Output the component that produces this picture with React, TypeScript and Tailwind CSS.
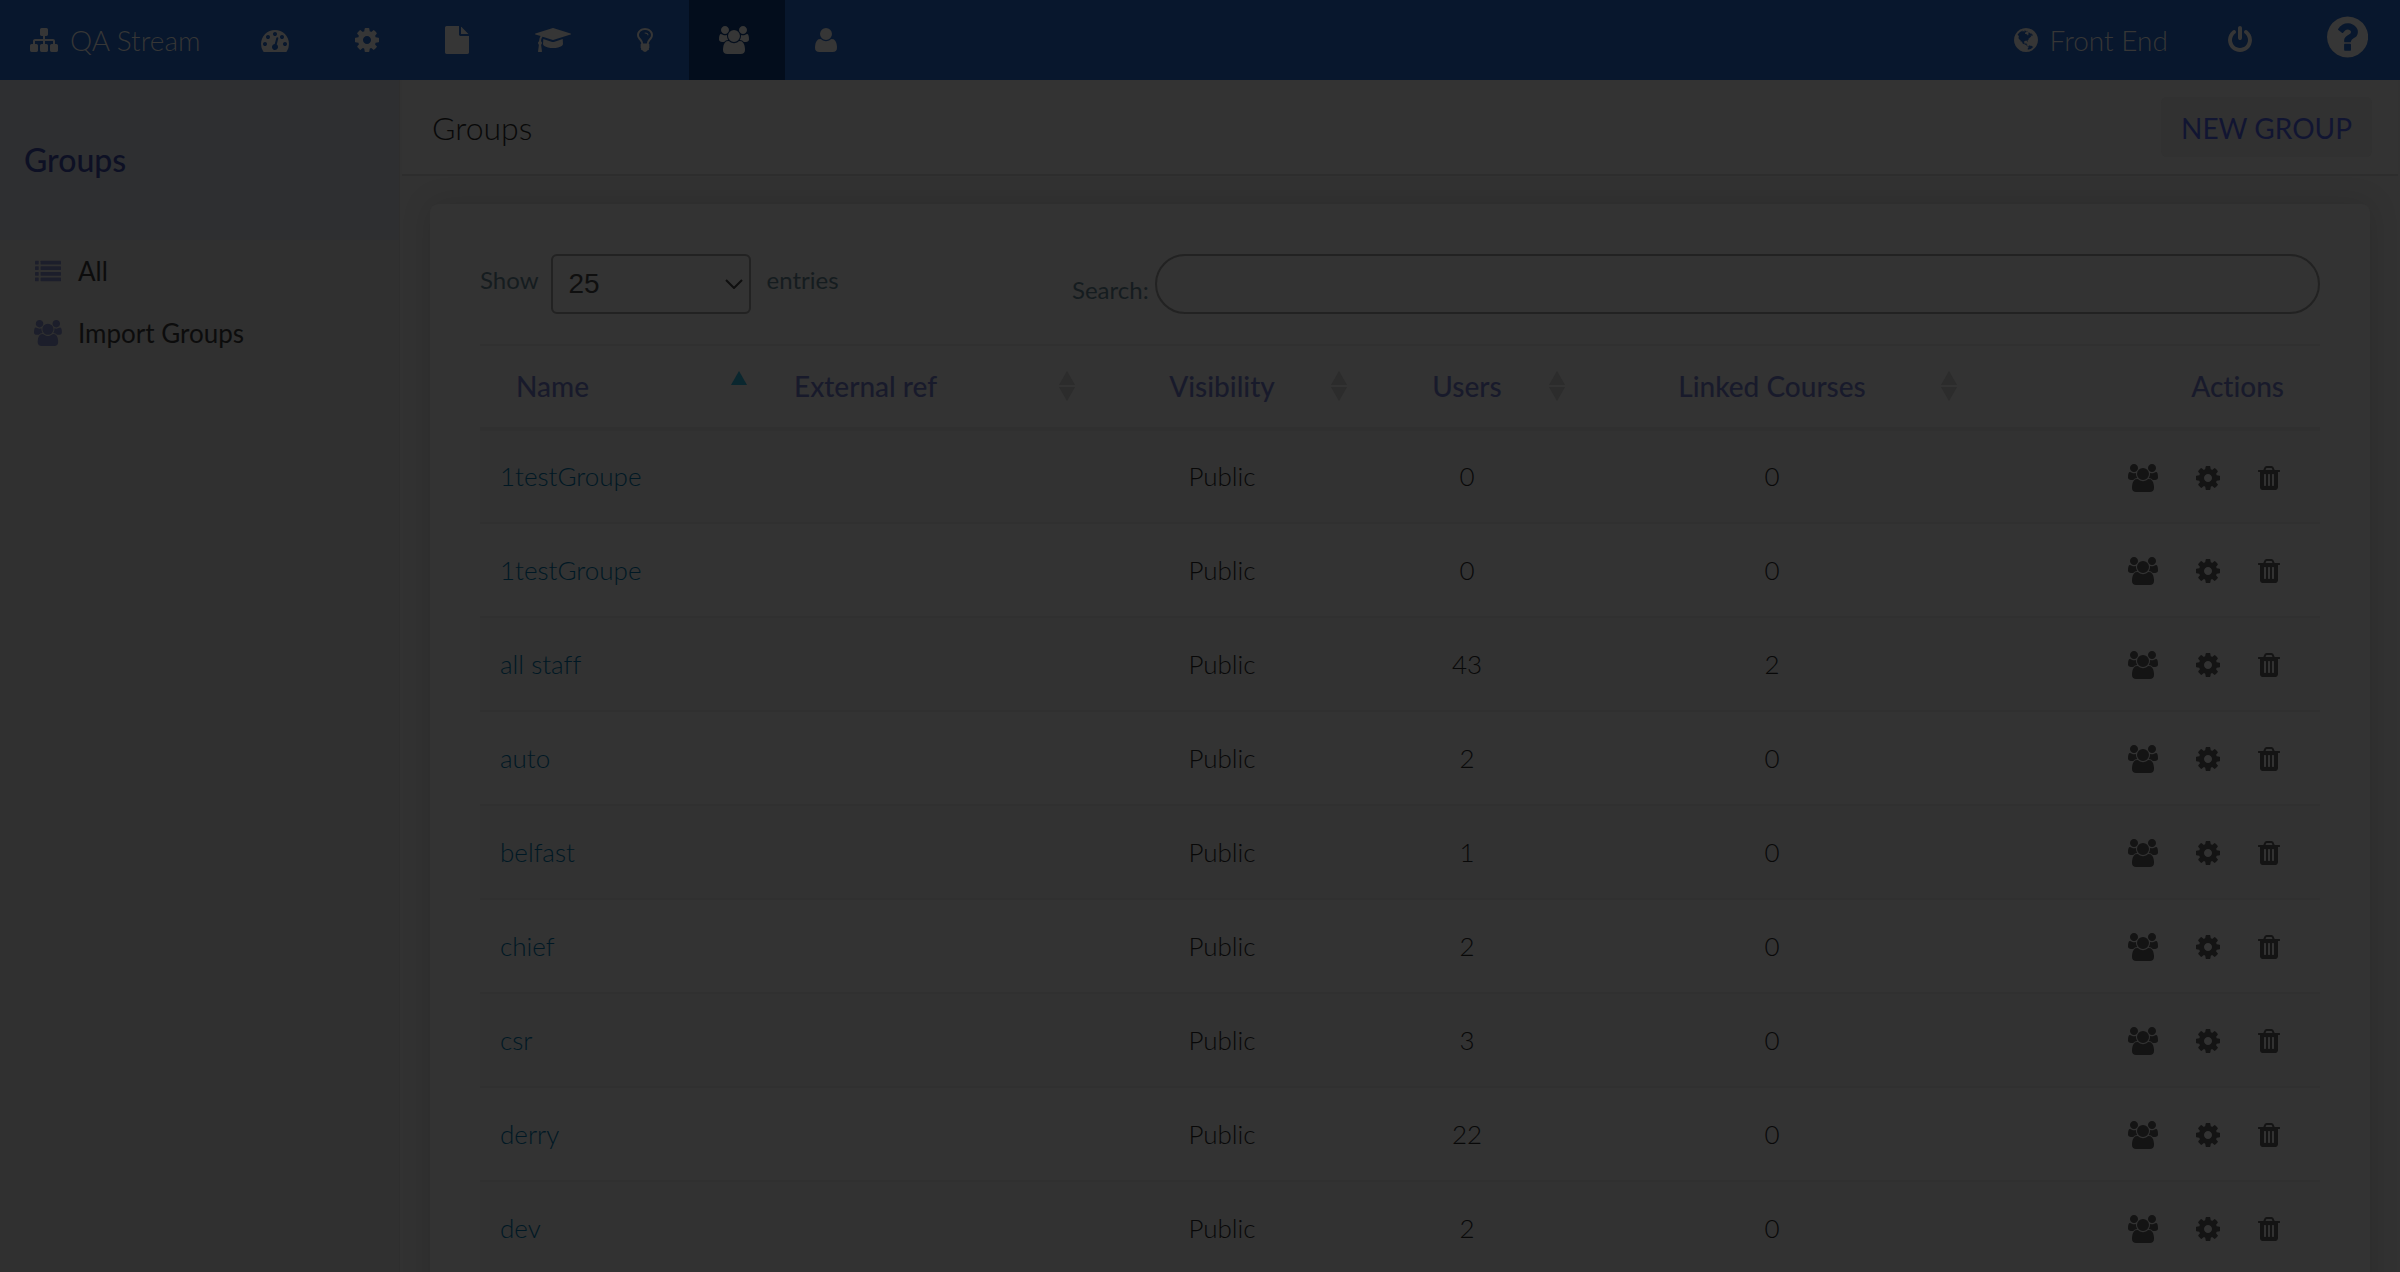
import type { ReactNode } from 'react';

type IconProps = { className?: string };

const Glyph = ({ box, d, className = 'h-7 w-auto' }: IconProps & { box: string; d: string }) => (
  <svg viewBox={box} className={`${className} shrink-0 fill-current`} aria-hidden="true">
    <path d={d} />
  </svg>
);

const Sitemap = (p: IconProps) => (
  <Glyph {...p} box="0 0 1792 1792" d="M1792 1248v320q0 40-28 68t-68 28h-320q-40 0-68-28t-28-68v-320q0-40 28-68t68-28h96v-192h-512v192h96q40 0 68 28t28 68v320q0 40-28 68t-68 28h-320q-40 0-68-28t-28-68v-320q0-40 28-68t68-28h96v-192h-512v192h96q40 0 68 28t28 68v320q0 40-28 68t-68 28h-320q-40 0-68-28t-28-68v-320q0-40 28-68t68-28h96v-192q0-52 38-90t90-38h512v-192h-96q-40 0-68-28t-28-68v-320q0-40 28-68t68-28h320q40 0 68 28t28 68v320q0 40-28 68t-68 28h-96v192h512q52 0 90 38t38 90v192h96q40 0 68 28t28 68z" />
);
const Gauge = (p: IconProps) => (
  <Glyph {...p} box="0 0 1792 1792" d="M384 1152q0-53-37.5-90.5t-90.5-37.5-90.5 37.5-37.5 90.5 37.5 90.5 90.5 37.5 90.5-37.5 37.5-90.5zm192-448q0-53-37.5-90.5t-90.5-37.5-90.5 37.5-37.5 90.5 37.5 90.5 90.5 37.5 90.5-37.5 37.5-90.5zm428 481l101-382q6-26-7.5-48.5t-38.5-29.5-48 6.5-30 39.5l-101 382q-60 5-107 43.5t-63 98.5q-20 77 20 146t117 89 146-20 89-117q16-60-6-117t-72-91zm660-33q0-53-37.5-90.5t-90.5-37.5-90.5 37.5-37.5 90.5 37.5 90.5 90.5 37.5 90.5-37.5 37.5-90.5zm-640-640q0-53-37.5-90.5t-90.5-37.5-90.5 37.5-37.5 90.5 37.5 90.5 90.5 37.5 90.5-37.5 37.5-90.5zm448 192q0-53-37.5-90.5t-90.5-37.5-90.5 37.5-37.5 90.5 37.5 90.5 90.5 37.5 90.5-37.5 37.5-90.5zm320 448q0 261-141 483-19 29-54 29h-1402q-35 0-54-29-141-221-141-483 0-182 71-348t191-286 286-191 348-71 348 71 286 191 191 286 71 348z" />
);
const Cog = (p: IconProps) => (
  <Glyph {...p} box="128 0 1536 1792" d="M1152 896q0-106-75-181t-181-75-181 75-75 181 75 181 181 75 181-75 75-181zm512-109v222q0 12-8 23t-20 13l-185 28q-19 54-39 91 35 50 107 138 10 12 10 25t-9 23q-27 37-99 108t-94 71q-12 0-26-9l-138-108q-44 23-91 38-16 136-29 186-7 28-36 28h-222q-14 0-24.5-8.5t-11.5-21.5l-28-184q-49-16-90-37l-141 107q-10 9-25 9-14 0-25-11-126-114-165-168-7-10-7-23 0-12 8-23 15-21 51-66.5t54-70.5q-27-50-41-99l-183-27q-13-2-21-12.5t-8-23.5v-222q0-12 8-23t19-13l186-28q14-46 39-92-40-57-107-138-10-12-10-24 0-10 9-23 26-36 98.5-107.5t94.5-71.5q13 0 26 10l138 107q44-23 91-38 16-136 29-186 7-28 36-28h222q14 0 24.5 8.5t11.5 21.5l28 184q49 16 90 37l142-107q9-9 24-9 13 0 25 10 129 119 165 170 7 8 7 22 0 12-8 23-15 21-51 66.5t-54 70.5q26 50 41 98l183 28q13 2 21 12.5t8 23.5z" />
);
const File = (p: IconProps) => (
  <Glyph {...p} box="128 0 1536 1792" d="M1152 512v-472q22 14 36 28l408 408q14 14 28 36h-472zm-128 32q0 40 28 68t68 28h544v1056q0 40-28 68t-68 28h-1344q-40 0-68-28t-28-68v-1600q0-40 28-68t68-28h800v544z" />
);
const GradCap = (p: IconProps) => (
  <Glyph {...p} box="0 0 2304 1792" d="M1774 836l18 316q4 69-82 128t-235 93.5-323 34.5-323-34.5-235-93.5-82-128l18-316 574 181q22 7 48 7t48-7zm530-324q0 23-22 31l-1120 352q-4 1-10 1t-10-1l-652-206q-43 34-71 111.5t-34 178.5q63 36 63 109 0 69-58 107l58 433q2 14-8 25-9 11-24 11h-192q-15 0-24-11-10-11-8-25l58-433q-58-38-58-107 0-73 65-111 11-207 98-330l-333-104q-22-8-22-31t22-31l1120-352q4-1 10-1t10 1l1120 352q22 8 22 31z" />
);
const Bulb = (p: IconProps) => (
  <Glyph {...p} box="384 0 1024 1792" d="M1120 576q0 13-9.5 22.5t-22.5 9.5-22.5-9.5-9.5-22.5q0-46-54-71t-106-25q-13 0-22.5-9.5t-9.5-22.5 9.5-22.5 22.5-9.5q50 0 99.5 16t87 54 37.5 90zm160 0q0-72-34.5-134t-90-101.5-123-62-136.5-22.5-136.5 22.5-123 62-90 101.5-34.5 134q0 101 68 180 10 11 30.5 33t30.5 33q128 153 141 298h228q13-145 141-298 10-11 30.5-33t30.5-33q68-79 68-180zm128 0q0 155-103 268-45 49-74.5 87t-59.5 95.5-34 107.5q47 28 47 82 0 37-25 64 25 27 25 64 0 52-45 81 13 23 13 47 0 46-31.5 71t-77.5 25q-20 44-60 70t-87 26-87-26-60-70q-46 0-77.5-25t-31.5-71q0-24 13-47-45-29-45-81 0-37 25-64-25-27-25-64 0-54 47-82-4-50-34-107.5t-59.5-95.5-74.5-87q-103-113-103-268 0-99 44.5-184.5t117-142 164-89 186.5-32.5 186.5 32.5 164 89 117 142 44.5 184.5z" />
);
const Users = (p: IconProps) => (
  <Glyph {...p} box="64 0 1920 1792" d="M657 896q-162 5-265 128h-134q-82 0-138-40.5t-56-118.5q0-353 124-353 6 0 43.5 21t97.5 42.5 119 21.5q67 0 133-23-5 37-5 66 0 139 81 256zm1071 637q0 120-73 189.5t-194 69.5h-874q-121 0-194-69.5t-73-189.5q0-53 3.5-103.5t14-109 26.5-108.5 43-97.5 62-81 85.5-53.5 111.5-20q10 0 43 21.5t73 48 107 48 135 21.5 135-21.5 107-48 73-48 43-21.5q61 0 111.5 20t85.5 53.5 62 81 43 97.5 26.5 108.5 14 109 3.5 103.5zm-1024-1277q0 106-75 181t-181 75-181-75-75-181 75-181 181-75 181 75 75 181zm704 384q0 159-112.5 271.5t-271.5 112.5-271.5-112.5-112.5-271.5 112.5-271.5 271.5-112.5 271.5 112.5 112.5 271.5zm576 225q0 78-56 118.5t-138 40.5h-134q-103-123-265-128 81-117 81-256 0-29-5-66 66 23 133 23 59 0 119-21.5t97.5-42.5 43.5-21q124 0 124 353zm-128-609q0 106-75 181t-181 75-181-75-75-181 75-181 181-75 181 75 75 181z" />
);
const User = (p: IconProps) => (
  <Glyph {...p} box="192 0 1408 1792" d="M1600 1405q0 120-73 189.5t-194 69.5h-874q-121 0-194-69.5t-73-189.5q0-53 3.5-103.5t14-109 26.5-108.5 43-97.5 62-81 85.5-53.5 111.5-20q9 0 42 21.5t74.5 48 108 48 133.5 21.5 133.5-21.5 108-48 74.5-48 42-21.5q61 0 111.5 20t85.5 53.5 62 81 43 97.5 26.5 108.5 14 109 3.5 103.5zm-320-893q0 159-112.5 271.5t-271.5 112.5-271.5-112.5-112.5-271.5 112.5-271.5 271.5-112.5 271.5 112.5 112.5 271.5z" />
);
const Globe = (p: IconProps) => (
  <Glyph {...p} box="128 0 1536 1792" d="M896 128q209 0 385.5 103t279.5 279.5 103 385.5-103 385.5-279.5 279.5-385.5 103-385.5-103-279.5-279.5-103-385.5 103-385.5 279.5-279.5 385.5-103zm274 521q-2 1-9.5 9.5t-13.5 9.5q2 0 4.5-5t5-11 3.5-7q6-7 22-15 14-6 52-12 34-8 51 11-2-2 9.5-13t14.5-12q3-2 15-4.5t15-7.5l2-22q-12 1-17.5-7t-6.5-21q0 2-6 8 0-7-4.5-8t-11.5 1-9 1q-10-3-15-7.5t-8-16.5-4-15q-2-5-9.5-11t-9.5-10q-1-2-2.5-5.5t-3-6.5-4-5.5-5.5-2.5-7 5-7.5 10-4.5 5q-3-2-6-1.5t-4.5 1-4.5 3-5 3.5q-3 2-8.5 3t-8.5 2q15-5-1-11-10-4-16-3 9-4 7.5-12t-8.5-14h5q-1-4-8.5-8.5t-17.5-8.5-13-6q-8-5-34-9.5t-33-.5q-5 6-4.5 10.5t4 14 3.5 12.5q1 6-5.5 13t-6.5 12q0 7 14 15.5t10 21.5q-3 8-16 16t-16 12q-5 8-1.5 18.5t10.5 16.5q2 2 1.5 4t-3.5 4.5-5.5 4-6.5 3.5l-3 2q-11 5-20.5-6t-13.5-26q-7-25-16-30-23-8-29 1-5-13-41-26-25-9-58-4 6-1 0-15-7-15-19-12 3-6 4-17.5t1-13.5q3-13 12-23 1-1 7-8.5t9.5-13.5.5-6q35 4 50-11 5-5 11.5-17t10.5-17q9-6 14-5.5t14.5 5.5 14.5 5q14 1 15.5-11t-7.5-20q12 1 3-17-4-7-8-9-12-4-27 5-8 4 2 8-1-1-9.5 10.5t-16.5 17.5-16-5q-1-1-5.5-13.5t-9.5-13.5q-8 0-16 15 3-8-11-15t-24-8q19-12-8-27-7-4-20.5-5t-19.5 4q-5 7-5.5 11.5t5 8 10.5 5.5 11.5 4 8.5 3q14 10 8 14-2 1-8.5 3.5t-11.5 4.5-6 4q-3 4 0 14t-2 14q-5-5-9-17.5t-7-16.5q7 9-25 6l-10-1q-4 0-16 2t-20.5 1-13.5-8q-4-8 0-20 1-4 4-2-4-3-11-9.5t-10-8.5q-46 15-94 41 6 1 12-1 5-2 13-6.5t10-5.5q34-14 42-7l5-5q14 16 20 25-7-4-30-1-20 6-22 12 7 12 5 18-4-3-11.5-10t-14.5-11-15-5q-16 0-22 1-146 80-235 222 7 7 12 8 4 1 5 9t2.5 11 11.5-3q9 8 3 19 1-1 44 27 19 17 21 21 3 11-10 18-1-2-9-9t-9-4q-3 5 .5 18.5t10.5 12.5q-7 0-9.5 16t-2.5 35.5-1 23.5l2 1q-3 12 5.5 34.5t21.5 19.5q-13 3 20 43 6 8 8 9 3 2 12 7.5t15 10 10 10.5q4 5 10 22.5t14 23.5q-2 6 9.5 20t10.5 23q-1 0-2.5 1t-2.5 1q3 7 15.5 14t15.5 13q1 3 2 10t3 11 8 2q2-20-24-62-15-25-17-29-3-5-5.5-15.5t-4.5-14.5q2 0 6 1.5t8.5 3.5 7.5 4 2 3q-3 7 2 17.5t12 18.5 17 19 12 13q6 6 14 19.5t0 13.5q9 0 20 10t17 20q5 8 8 26t5 24q2 7 8.5 13.5t12.5 9.5l16 8 13 7q5 2 18.5 10.5t21.5 11.5q10 4 16 4t14.5-2.5 13.5-3.5q15-2 29 15t21 21q36 19 55 11-2 1 .5 7.5t8 15.5 9 14.5 5.5 8.5q5 6 18 15t18 15q6-4 7-9-3 8 7 20t18 10q14-3 14-32-31 15-49-18 0-1-2.5-5.5t-4-8.5-2.5-8.5 0-7.5 5-3q9 0 10-3.5t-2-12.5-4-13q-1-8-11-20t-12-15q-5 9-16 8t-16-9q0 1-1.5 5.5t-1.5 6.5q-13 0-15-1 1-3 2.5-17.5t3.5-22.5q1-4 5.5-12t7.5-14.5 4-12.5-4.5-9.5-17.5-2.5q-19 1-26 20-1 3-3 10.5t-5 11.5-9 7q-7 3-24 2t-24-5q-13-8-22.5-29t-9.5-37q0-10 2.5-26.5t3-25-5.5-24.5q3-2 9-9.5t10-10.5q2-1 4.5-1.5t4.5 0 4-1.5 3-6q-1-1-4-3-3-3-4-3 7 3 28.5-1.5t27.5 1.5q15 11 22-2 0-1-2.5-9.5t-.5-13.5q5 27 29 9 3 3 15.5 5t17.5 5q3 2 7 5.5t5.5 4.5 5-.5 8.5-6.5q10 14 12 24 11 40 19 44 7 3 11 2t4.5-9.5 0-14-1.5-12.5l-1-8v-18l-1-8q-15-3-18.5-12t1.5-18.5 15-18.5q1-1 8-3.5t15.5-6.5 12.5-8q21-19 15-35 7 0 11-9-1 0-5-3t-7.5-5-4.5-2q9-5 2-16 5-3 7.5-11t7.5-10q9 12 21 2 8-8 1-16 5-7 20.5-10.5t18.5-9.5q7 2 8-2t1-12 3-12q4-5 15-9t13-5l17-11q3-4 0-4 18 2 31-11 10-11-6-20 3-6-3-9.5t-15-5.5q3-1 11.5-.5t10.5-1.5q15-10-7-16-17-5-43 12zm-163 877q206-36 351-189-3-3-12.5-4.5t-12.5-3.5q-18-7-24-8 1-7-2.5-13t-8-9-12.5-8-11-7q-2-2-7-6t-7-5.5-7.5-4.5-8.5-2-10 1l-3 1q-3 1-5.5 2.5t-5.5 3-4 3 0 2.5q-21-17-36-22-5-1-11-5.5t-10.5-7-10-1.5-11.5 7q-5 5-6 15t-2 13q-7-5 0-17.5t2-18.5q-3-6-10.5-4.5t-12 4.5-11.5 8.5-9 6.5-8.5 5.5-8.5 7.5q-3 4-6 12t-5 11q-2-4-11.5-6.5t-9.5-5.5q2 10 4 35t5 38q7 31-12 48-27 25-29 40-4 22 12 26 0 7-8 20.5t-7 21.5q0 6 2 16z" />
);
const Power = (p: IconProps) => (
  <Glyph {...p} box="128 0 1536 1792" d="M1664 896q0 156-61 298t-164 245-245 164-298 61-298-61-245-164-164-245-61-298q0-182 80.5-343t226.5-270q43-32 95.5-25t83.5 50q32 42 24.5 94.5t-49.5 84.5q-98 74-151.5 181t-53.5 228q0 104 40.5 198.5t109.5 163.5 163.5 109.5 198.5 40.5 198.5-40.5 163.5-109.5 109.5-163.5 40.5-198.5q0-121-53.5-228t-151.5-181q-42-32-49.5-84.5t24.5-94.5q31-43 84-50t95 25q146 109 226.5 270t80.5 343zm-640-768v640q0 52-38 90t-90 38-90-38-38-90v-640q0-52 38-90t90-38 90 38 38 90z" />
);
const Question = (p: IconProps) => (
  <Glyph {...p} box="128 0 1536 1792" d="M1024 1376v-192q0-14-9-23t-23-9h-192q-14 0-23 9t-9 23v192q0 14 9 23t23 9h192q14 0 23-9t9-23zm256-672q0-88-55.5-163t-138.5-116-170-41q-243 0-371 213-15 24 8 42l132 100q7 6 19 6 16 0 25-12 53-68 86-92 34-24 86-24 48 0 85.5 26t37.5 59q0 38-20 61t-68 45q-63 28-115.5 86.5t-52.5 125.5v36q0 14 9 23t23 9h192q14 0 23-9t9-23q0-19 21.5-49.5t54.5-49.5q32-18 49-28.5t46-35 44.5-48 28-60.5 12.5-81zm384 192q0 209-103 385.5t-279.5 279.5-385.5 103-385.5-103-279.5-279.5-103-385.5 103-385.5 279.5-279.5 385.5-103 385.5 103 279.5 279.5 103 385.5z" />
);
const Trash = (p: IconProps) => (
  <Glyph {...p} box="192 0 1408 1792" d="M704 1376v-704q0-14-9-23t-23-9h-64q-14 0-23 9t-9 23v704q0 14 9 23t23 9h64q14 0 23-9t9-23zm256 0v-704q0-14-9-23t-23-9h-64q-14 0-23 9t-9 23v704q0 14 9 23t23 9h64q14 0 23-9t9-23zm256 0v-704q0-14-9-23t-23-9h-64q-14 0-23 9t-9 23v704q0 14 9 23t23 9h64q14 0 23-9t9-23zm-544-992h448l-48-117q-7-9-17-11h-317q-10 2-17 11zm928 32v64q0 14-9 23t-23 9h-96v948q0 83-47 143.5t-113 60.5h-832q-66 0-113-58.5t-47-141.5v-952h-96q-14 0-23-9t-9-23v-64q0-14 9-23t23-9h309l70-167q15-37 54-63t79-26h320q40 0 79 26t54 63l70 167h309q14 0 23 9t9 23z" />
);
const List = ({ className }: IconProps) => (
  <svg viewBox="0 0 1792 1792" className={`${className} shrink-0 fill-current`} aria-hidden="true">
    {[192, 576, 960, 1344].map((y) => (
      <g key={y}>
        <rect x="0" y={y} width="256" height="256" rx="32" />
        <rect x="384" y={y} width="1408" height="256" rx="32" />
      </g>
    ))}
  </svg>
);

const SortBoth = () => (
  <svg viewBox="0 0 16 30" className="h-[30px] w-4 fill-[#2c2c2c]" aria-hidden="true">
    <path d="M8 0l8 14H0zM8 30l8-14H0z" />
  </svg>
);
const SortAsc = () => (
  <svg viewBox="0 0 16 30" className="h-[30px] w-4 fill-[#0a272f]" aria-hidden="true">
    <path d="M8 0l8 14H0z" />
  </svg>
);

const NavItem = ({ label, active, children }: { label: string; active?: boolean; children: ReactNode }) => (
  <a
    href="#"
    aria-label={label}
    className={`flex h-20 items-center pr-9 pl-[30px] ${active ? 'bg-[#030d1c]' : ''}`}
  >
    {children}
  </a>
);

const columns = [
  { title: 'Name', width: 'w-[278px]', align: 'pl-9 text-left', sort: 'asc' },
  { title: 'External ref', width: 'w-[328px]', align: 'pl-9 text-left', sort: 'both' },
  { title: 'Visibility', width: 'w-[272px]', align: 'text-center', sort: 'both' },
  { title: 'Users', width: 'w-[218px]', align: 'text-center', sort: 'both' },
  { title: 'Linked Courses', width: 'w-[392px]', align: 'text-center', sort: 'both' },
  { title: 'Actions', width: 'w-[352px]', align: 'pr-9 text-right', sort: '' },
];

const groups = [
  { name: '1testGroupe', users: 0, courses: 0 },
  { name: '1testGroupe', users: 0, courses: 0 },
  { name: 'all staff', users: 43, courses: 2 },
  { name: 'auto', users: 2, courses: 0 },
  { name: 'belfast', users: 1, courses: 0 },
  { name: 'chief', users: 2, courses: 0 },
  { name: 'csr', users: 3, courses: 0 },
  { name: 'derry', users: 22, courses: 0 },
  { name: 'dev', users: 2, courses: 0 },
];

const Header = () => (
  <header className="flex h-20 items-center justify-between bg-[#08172d] pr-8 text-[28px] font-light text-[#363636]">
    <nav className="flex items-center">
      <a href="#" className="flex h-20 items-center gap-3 pr-[30px] pl-[30px] whitespace-nowrap">
        <Sitemap />
        QA Stream
      </a>
      <NavItem label="Dashboard"><Gauge /></NavItem>
      <NavItem label="Settings"><Cog /></NavItem>
      <NavItem label="Pages"><File /></NavItem>
      <NavItem label="Courses"><GradCap /></NavItem>
      <NavItem label="Skills"><Bulb /></NavItem>
      <NavItem label="Groups" active><Users /></NavItem>
      <NavItem label="Users"><User /></NavItem>
    </nav>
    <div className="flex items-center">
      <a href="#" className="mr-[60px] flex items-center gap-3 whitespace-nowrap">
        <Globe />
        Front End
      </a>
      <button type="button" aria-label="Log out" className="mr-[75px]"><Power /></button>
      <button type="button" aria-label="Help" className="pb-[6px]"><Question className="h-12 w-auto" /></button>
    </div>
  </header>
);

const Sidebar = () => (
  <aside className="w-[400px] shrink-0 border-r border-[#2e2e2e] bg-[#303030]">
    <h2 className="flex h-40 items-center bg-[#2e2f31] pl-6 text-[32px] font-medium text-[#0d1024]">Groups</h2>
    <ul className="flex flex-col text-[26px] text-[#0c0c0c]">
      <li>
        <a href="#" className="flex h-[62px] items-center gap-4 pl-[34px]">
          <span className="flex w-7 justify-center text-[#1c1e2b]"><List className="size-[26px]" /></span>
          All
        </a>
      </li>
      <li>
        <a href="#" className="flex h-[62px] items-center gap-4 pl-[34px]">
          <span className="flex w-7 justify-center text-[#1c1e2b]"><Users className="h-[26px] w-auto" /></span>
          Import Groups
        </a>
      </li>
    </ul>
  </aside>
);

const Controls = () => (
  <div className="flex items-start justify-between text-2xl text-[#151c1f]">
    <div className="flex">
      <label htmlFor="length" className="mt-[10px] mr-3">Show</label>
      <div className="relative">
        <select
          id="length"
          defaultValue="25"
          className="h-[60px] w-[200px] appearance-none rounded-md border-2 border-[#222222] bg-[#333333] pl-4 font-['Liberation_Sans',sans-serif] text-[28px] text-[#0f0f0f]"
        >
          <option>10</option>
          <option>25</option>
          <option>50</option>
          <option>100</option>
        </select>
        <svg viewBox="0 0 18 10" className="pointer-events-none absolute top-[25px] right-2 h-[10px] w-[18px] fill-none stroke-[#0f0f0f] stroke-2" aria-hidden="true">
          <path d="M1 1l8 8 8-8" />
        </svg>
      </div>
      <span className="mt-[10px] ml-4">entries</span>
    </div>
    <div className="flex w-[1248px] items-start gap-[6px]">
      <label htmlFor="search" className="mt-5">Search:</label>
      <input id="search" type="search" className="h-[60px] min-w-0 flex-1 rounded-full border-2 border-[#222222] bg-[#333333] px-6 text-[26px] outline-none" />
    </div>
  </div>
);

const GroupTable = () => (
  <table className="mt-[30px] w-full table-fixed border-collapse">
    <thead>
      <tr className="h-[84px] border-t-2 border-b-4 border-[#303030]">
        {columns.map((c) => (
          <th key={c.title} scope="col" className={`relative p-0 pb-[2px] text-[28px] font-medium text-[#181a2b] ${c.width} ${c.align}`}>
            {c.title}
            {c.sort && (
              <button type="button" aria-label={`Sort by ${c.title}`} className="absolute top-[25px] right-[11px]">
                {c.sort === 'asc' ? <SortAsc /> : <SortBoth />}
              </button>
            )}
          </th>
        ))}
      </tr>
    </thead>
    <tbody>
      {groups.map((g, i) => (
        <tr key={i} className="h-[94px] border-b-2 border-[#303030] text-center text-[26px] font-light text-[#080808] odd:bg-[#323232]">
          <td className="pl-5 text-left"><a href="#" className="text-[#001824]">{g.name}</a></td>
          <td />
          <td>Public</td>
          <td>{g.users}</td>
          <td>{g.courses}</td>
          <td className="pt-[2px] pr-10">
            <div className="flex justify-end gap-[38px] text-[#141414]">
              <button type="button" aria-label="Members"><Users /></button>
              <button type="button" aria-label="Edit"><Cog /></button>
              <button type="button" aria-label="Delete"><Trash /></button>
            </div>
          </td>
        </tr>
      ))}
    </tbody>
  </table>
);

export default function App() {
  return (
    <div className="flex h-screen flex-col overflow-hidden bg-[#323232] font-[Lato,sans-serif] [font-variant-ligatures:none]">
      <Header />
      <div className="flex min-h-0 flex-1">
        <Sidebar />
        <main className="min-w-0 flex-1">
          <div className="mx-[2px] flex h-24 items-center justify-between border-b-2 border-[#2d2d2d] bg-[#333333] pr-[26px] pl-[30px]">
            <h1 className="pt-[2px] text-[32px] font-light text-[#080808]">Groups</h1>
            <button type="button" className="h-[60px] rounded-md bg-[#313131] px-5 pt-[2px] text-[28px] text-[#111532]">NEW GROUP</button>
          </div>
          <section className="mx-[30px] mt-7 rounded-lg bg-[#333333] p-[50px] shadow-[0_0_30px_rgba(0,0,0,0.14)]">
            <Controls />
            <GroupTable />
          </section>
        </main>
      </div>
    </div>
  );
}
